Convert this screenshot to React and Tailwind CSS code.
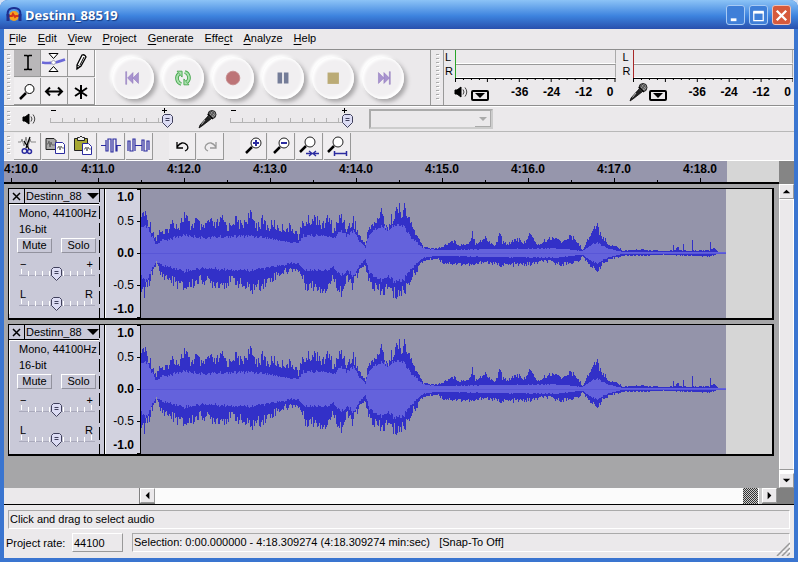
import clsx from 'clsx';

const MENUS = ['File', 'Edit', 'View', 'Project', 'Generate', 'Effect', 'Analyze', 'Help'];
const UNDERLINED = { Effect: 4 };

// [x, amplitude] points of the waveform outline
const UPPER = [
  [0, 42], [2, 46], [6, 39], [11, 26], [15, 15], [18, 27], [22, 20], [27, 28], [32, 36], [37, 30], [43, 43],
  [49, 30], [55, 37], [61, 26], [67, 36], [74, 31], [81, 38], [87, 29], [93, 39], [100, 31], [108, 43], [116, 32],
  [122, 37], [127, 28], [132, 34], [137, 28], [147, 29], [154, 26], [157, 18], [161, 33], [169, 38], [177, 40],
  [181, 29], [185, 40], [190, 33], [192, 24], [200, 43], [206, 27], [212, 38], [217, 22], [224, 9], [227, 30],
  [234, 33], [239, 47], [247, 28], [252, 45], [261, 50], [264, 47], [271, 30], [277, 16], [282, 7], [296, 5],
  [302, 8], [311, 14], [319, 9], [328, 12], [331, 24], [334, 11], [344, 17], [352, 9], [356, 12], [358, 26],
  [361, 12], [366, 11], [376, 17], [381, 10], [388, 21], [397, 9], [404, 14], [414, 19], [421, 11], [425, 19],
  [434, 16], [441, 4], [446, 14], [451, 27], [456, 30], [461, 19], [466, 11], [474, 8], [481, 3], [500, 4],
  [524, 2], [531, 3], [532, 11], [533, 3], [537, 7], [538, 3], [541, 3], [542, 11], [543, 3], [550, 2], [551, 13],
  [552, 3], [568, 3], [569, 12], [570, 4], [573, 6], [577, 1], [585, 1],
];
const LOWER = [
  [0, 42], [2, 47], [7, 36], [12, 19], [15, 11], [19, 24], [27, 29], [43, 40], [60, 30], [69, 34], [81, 35],
  [93, 31], [108, 42], [124, 34], [137, 24], [154, 18], [159, 23], [164, 36], [185, 41], [192, 28], [200, 45],
  [206, 30], [211, 36], [217, 24], [223, 12], [227, 32], [239, 46], [247, 40], [252, 47], [262, 45], [269, 30],
  [276, 18], [282, 9], [296, 6], [302, 11], [332, 14], [342, 10], [360, 14], [389, 13], [404, 9], [419, 13],
  [437, 10], [441, 4], [447, 11], [454, 21], [462, 12], [474, 5], [484, 3], [500, 3], [524, 2], [569, 4], [577, 1],
  [585, 1],
];
const RMS = [
  [0, 26], [4, 31], [10, 18], [15, 9], [20, 13], [30, 15], [43, 19], [60, 16], [80, 17], [108, 18], [125, 16],
  [150, 11], [157, 11], [162, 18], [185, 18], [192, 15], [200, 24], [206, 18], [212, 24], [218, 13], [224, 6],
  [228, 21], [240, 29], [247, 25], [252, 29], [262, 29], [270, 16], [282, 5], [296, 3], [340, 4], [414, 5],
  [441, 2], [451, 9], [456, 11], [466, 5], [481, 1], [585, 1],
];

const levelAt = (points, x) => {
  const i = points.findIndex((p) => p[0] >= x);
  if (i <= 0) return points[0][1];
  const [x0, y0] = points[i - 1];
  const [x1, y1] = points[i];
  return y0 + ((y1 - y0) * (x - x0)) / (x1 - x0);
};

const noise = (n) => {
  const v = Math.sin(n * 12.9898) * 43758.5453;
  return v - Math.floor(v);
};

const outline = (top, bottom, depth, seed) => {
  let up = '';
  let down = '';
  for (let x = 0; x < 585; x += 1) {
    const a = levelAt(top, x) * (1.04 - depth * noise(x + seed));
    const b = levelAt(bottom, x) * (1.04 - depth * noise(x + seed + 700));
    up += `L${x} ${64 - a}L${x + 1} ${64 - a}`;
    down = `L${x + 1} ${64 + b}L${x} ${64 + b}` + down;
  }
  return `M0 64${up}${down}Z`;
};

const PEAK_PATH = outline(UPPER, LOWER, 0.34, 3);
const RMS_PATH = outline(RMS, RMS, 0.18, 91);

const Grip = () => (
  <div className="w-[10px] shrink-0 self-stretch flex justify-center py-1">
    <svg className="w-1 h-full" aria-hidden="true">
      <defs>
        <pattern id="grip" width="4" height="4" patternUnits="userSpaceOnUse">
          <path d="M0 .5h3" stroke="#aaa" />
          <path d="M1 1.5h3" stroke="#fff" />
        </pattern>
      </defs>
      <rect width="4" height="100%" fill="url(#grip)" />
    </svg>
  </div>
);

const Speaker = () => (
  <svg width="14" height="14" viewBox="0 0 14 14" fill="none" stroke="#000" aria-hidden="true">
    <path d="M1 5h2l4-3v10l-4-3H1z" fill="#000" />
    <path d="M9 4.500q2 2.500 0 5M11 2.500q3.500 4.500 0 9" stroke="#444" />
  </svg>
);

const Mic = () => (
  <svg width="20" height="20" viewBox="0 0 20 20" aria-hidden="true">
    <path d="M10 7l3 3-9 7-3 2 1-3z" fill="#222" stroke="#000" strokeWidth=".7" />
    <path d="M7 11l-3.500 4.500" stroke="#bbb" />
    <circle cx="14" cy="5.500" r="4" fill="#999" stroke="#222" />
    <path d="M11 3l6 5M10.500 6l4 3M13 2l4.500 4M16.500 2.500l-5 6M13.500 2l-3 4" stroke="#333" strokeWidth=".7" />
    <path d="M10 5l5 5" stroke="#000" strokeWidth="1.500" />
  </svg>
);

const Lens = ({ x = 15, y = 9, r = 5 }) => (
  <>
    <path d={`M${x - 4} ${y + 4}l-6 6`} stroke="#000" strokeWidth="2.500" />
    <circle cx={x} cy={y} r={r} fill="#fff" stroke="#222" />
  </>
);

const toolIcons = {
  Selection: <path d="M10 5.500h3l1 1 1-1h3M10 19.500h3l1-1 1 1h3M14 6v13" strokeWidth="1.600" />,
  Envelope: (
    <>
      <path d="M1 12.500q11 2 23-3" stroke="#6b68d8" strokeWidth="2.500" />
      <path d="M8 3.500h9l-4.500 5zM8 21.500h9l-4.500-5z" fill="#fff" />
      <circle cx="12.500" cy="12.500" r="2" fill="#fff" stroke="#aab" />
    </>
  ),
  Draw: (
    <>
      <path d="M9 15l5-10q3-1 4 2l-5 9-4 3z" fill="#fff" strokeWidth="1.300" />
      <path d="M9 15l3 1.500M12 15l4-8M9 19l1-2" />
    </>
  ),
  Zoom: (
    <>
      <path d="M12 15l-6 6" strokeWidth="2.500" />
      <circle cx="15.500" cy="11" r="4.500" fill="#fff" />
    </>
  ),
  'Time Shift': <path d="M5 13.500h16M9 9.500l-4 4 4 4M17 9.500l4 4-4 4" strokeWidth="2" />,
  'Multi-Tool': <path d="M13 7v14M7 10l12 8M19 10L7 18" strokeWidth="2" />,
};

const LOOP_ARCS = 'M9 17.500A6.500 6.500 0 0 1 6.500 6.500M13 4.500a6.500 6.500 0 0 1 2.500 11';

const transport = {
  'Skip to Start': (
    <g fill="#a893cf" stroke="#9078bd" strokeWidth=".6">
      <path d="M3 4h1v14H3zM11 5v12L5 11zM17 5v12l-6-6z" />
    </g>
  ),
  Play: (
    <g fill="none" stroke="#47a84e">
      <path d={LOOP_ARCS} strokeWidth="4" />
      <path d="M4.500 3.500H10V10zM17.500 18.500H12V12z" fill="#a9e0ad" />
      <path d={LOOP_ARCS} stroke="#a9e0ad" strokeWidth="2" />
    </g>
  ),
  Record: <circle cx="11" cy="11" r="7.500" fill="#bd7477" stroke="#c68b8d" />,
  Pause: <path d="M5 5h5v12H5zM12 5h5v12h-5z" fill="#747c98" />,
  Stop: <path d="M5 5h12.500v12.500H5z" fill="#bbab76" />,
  'Skip to End': (
    <g fill="#a893cf" stroke="#9078bd" strokeWidth=".6">
      <path d="M18 4h1v14h-1zM6 5v12l6-6zM12 5v12l6-6z" />
    </g>
  ),
};

const editIcons = {
  Cut: (
    <>
      <path d="M3 8h3l1-3 2 7 2-9 2 10 2-8 1 3h5" stroke="#888" />
      <path d="M15 3l-4 11M9 7l5 8" strokeWidth="1.300" />
      <circle cx="9.500" cy="17" r="2.300" stroke="#2b2ba0" strokeWidth="1.500" />
      <circle cx="14.500" cy="17.500" r="2" stroke="#2b2ba0" strokeWidth="1.500" />
    </>
  ),
  Copy: (
    <>
      <path d="M3 4.500h8l2 2v9H3z" fill="#aaa" stroke="#222" />
      <path d="M4 10h1l1-3 1 6 1-5 1 3h3" stroke="#666" />
      <path d="M12.500 8.500h7l2 2v9h-9z" fill="#fff" stroke="#2b2ba0" />
      <path d="M14 14h1l1-2 1 4 1-4 1 2h2" stroke="#555" strokeWidth=".8" />
    </>
  ),
  Paste: (
    <>
      <path d="M3.500 4.500h13v12h-13z" fill="#a8a832" stroke="#222" />
      <path d="M6.500 6.500v-3h2l1.500-1.500 1.500 1.500h2v3z" fill="#eee" stroke="#222" />
      <path d="M11.500 9.500h6l3 3v8h-9z" fill="#fff" stroke="#2b2ba0" />
      <path d="M13 15h1l1-2 1 4 1-4 1 2h2" stroke="#555" strokeWidth=".8" />
    </>
  ),
  Trim: <path d="M2 11.500h5V6v11h2V5h3v13h2V5h3v12h1v-5.500h4" stroke="#2b2ba0" strokeWidth="1.200" />,
  Silence: <path d="M1 17V7h2v10h3V5h2v12M8 11.500h7M15 17V6h2v11h3V7h2v9" stroke="#2b2ba0" strokeWidth="1.200" />,
};

const historyIcons = {
  Undo: <path d="M7 8v6h6M7 13q5-7 10-2 2.500 4-2 6" strokeWidth="1.300" />,
  Redo: <path d="M18 8v6h-6M18 13q-5-7-10-2-2.500 4 2 6" stroke="#999" strokeWidth="1.300" />,
};

const zoomIcons = {
  'Zoom In': (
    <>
      <Lens />
      <path d="M12 9h6M15 6v6" stroke="#2b2ba0" strokeWidth="2" />
    </>
  ),
  'Zoom Out': (
    <>
      <Lens />
      <path d="M12 9h6" stroke="#2b2ba0" strokeWidth="2" />
    </>
  ),
  'Fit Selection': (
    <>
      <Lens x={13} y={8} />
      <path d="M9 19.500h13M12 17l3 2.500-3 2.500M19 17l-3 2.500 3 2.500" stroke="#2b2ba0" strokeWidth="1.300" />
    </>
  ),
  'Fit Project': (
    <>
      <Lens x={13} y={8} />
      <path d="M9 19.500h13M9.500 17v5M21.500 17v5" stroke="#2b2ba0" strokeWidth="1.500" />
    </>
  ),
};

const IconButton = ({ label, pressed, children }) => (
  <button
    type="button"
    aria-label={label}
    className={clsx(
      'w-[27px] h-[27px] flex items-center justify-center border-r border-b border-[#989898]',
      pressed ? 'bg-[#b9b7b9]' : 'bg-[#f0eef0]',
    )}
  >
    {children}
  </button>
);

const IconGroup = ({ icons }) => (
  <div className="flex gap-px">
    {Object.entries(icons).map(([label, icon]) => (
      <IconButton key={label} label={label}>
        <svg width="24" height="24" viewBox="0 0 24 24" fill="none" stroke="#000" aria-hidden="true">
          {icon}
        </svg>
      </IconButton>
    ))}
  </div>
);

const TitleBar = () => (
  <header className="h-[29px] flex items-center pl-[5px] pr-[7px] bg-linear-to-b from-[#8cc3f6] via-[#3d83de] via-55% to-[#2950ad]">
    <svg width="18" height="18" viewBox="0 0 18 18" fill="none" aria-hidden="true">
      <circle cx="9" cy="10" r="5" fill="#f5a21f" />
      <path d="M4 10h3l1-2 2 3 1-1h3" stroke="#d5331a" strokeWidth="2" />
      <path d="M3 11Q1 2 9 2t6 9" stroke="#1b2f91" strokeWidth="2" />
      <path d="M3 8v7M15 8v7" stroke="#20308c" strokeWidth="3" />
    </svg>
    <h1 className="ml-[2px] font-['Noto_Sans',sans-serif] text-[13px] leading-4 font-bold text-white [text-shadow:1px_1px_1px_#14387f]">
      Destinn_88519
    </h1>
    <div className="ml-auto flex gap-1 pt-px">
      <button type="button" aria-label="Minimize" className="w-[19px] h-[20px] rounded-[3px] border border-[#a9cbf4] bg-[#3f7fd8]">
        <svg viewBox="0 0 18 18" aria-hidden="true">
          <path d="M4 12h6v3H4z" fill="#fff" />
        </svg>
      </button>
      <button type="button" aria-label="Maximize" className="w-[19px] h-[20px] rounded-[3px] border border-[#a9cbf4] bg-[#3f7fd8]">
        <svg viewBox="0 0 18 18" aria-hidden="true">
          <path d="M4 5.500h10v9H4z" fill="none" stroke="#fff" strokeWidth="1.300" />
          <path d="M3.500 4h11v3h-11z" fill="#fff" />
        </svg>
      </button>
      <button type="button" aria-label="Close" className="w-[19px] h-[20px] rounded-[3px] border border-[#f0c0b4] bg-[#d65a3c]">
        <svg viewBox="0 0 18 18" aria-hidden="true">
          <path d="M4 4l10 10M14 4L4 14" stroke="#fff" strokeWidth="2.500" />
        </svg>
      </button>
    </div>
  </header>
);

const MenuBar = () => (
  <nav className="h-5 flex items-center gap-[11px] px-[5px] pb-[2px]">
    {MENUS.map((name) => {
      const at = UNDERLINED[name] ?? 0;
      return (
        <button type="button" key={name}>
          {name.slice(0, at)}
          <span className="underline underline-offset-2">{name[at]}</span>
          {name.slice(at + 1)}
        </button>
      );
    })}
  </nav>
);

const Meter = ({ label, icon, line }) => (
  <section aria-label={label} className="flex-1 flex flex-col">
    <div className="flex">
      <div className="w-[10px] text-[11px] leading-[14px]">
        <div>L</div>
        <div>R</div>
      </div>
      <div className={clsx('flex-1 border-l', line)}>
        <div className="h-[14px] border-r border-r-[#aaa] border-b border-b-white" />
        <div className="h-[14px] border-t border-t-[#999] border-r border-r-[#aaa] border-b border-b-white" />
      </div>
    </div>
    <svg className="ml-[10px] w-[calc(100%-10px)] h-[5px]" viewBox="0 0 161 5" preserveAspectRatio="none" aria-hidden="true">
      <path d="M0 .5h161" stroke="#000" />
      {Array.from({ length: 21 }, (_, i) => (
        <path key={i} d={`M${i * 8 + 0.5} 0v${i % 4 === 0 ? 4 : 2}`} stroke="#000" />
      ))}
    </svg>
    <div className="flex items-center h-[17px] pl-[6px]">
      <span className="w-[20px] flex justify-center">{icon}</span>
      <button type="button" aria-label={`${label} options`} className="mt-2 w-[18px] h-[11px] border-2 border-black rounded-[2px] flex justify-center">
        <svg width="12" height="7" aria-hidden="true">
          <path d="M1 1h10L6 6z" fill="#000" />
        </svg>
      </button>
      <div className="flex-1 flex justify-between pl-[22px] pr-[2px] font-bold text-[12px] leading-4">
        <span>-36</span>
        <span>-24</span>
        <span>-12</span>
        <span>0</span>
      </div>
    </div>
  </section>
);

const ControlToolbar = () => (
  <div className="h-[57px] flex border-t border-[#8e8e8e] border-b">
    <Grip />
    <div className="grid grid-cols-3 shrink-0 border-r border-white">
      {Object.entries(toolIcons).map(([label, icon]) => (
        <IconButton key={label} label={`${label} Tool`} pressed={label === 'Selection'}>
          <svg width="26" height="26" viewBox="0 0 26 26" fill="none" stroke="#000" aria-hidden="true">
            {icon}
          </svg>
        </IconButton>
      ))}
    </div>
    <div className="flex items-center pl-3 pr-[22px] shrink-0 bg-[#ebe9eb]">
      {Object.entries(transport).map(([label, icon]) => (
        <div key={label} className="w-[50px] flex justify-center">
          <button
            type="button"
            aria-label={label}
            className="size-[42px] rounded-full flex items-center justify-center bg-[#f1eff1] shadow-[3px_3px_4px_#a9a7a9,-2px_-2px_3px_#fff,inset_2px_2px_3px_#fff,inset_-2px_-2px_3px_#fff]"
          >
            <svg width="20" height="20" viewBox="0 0 22 22" aria-hidden="true">
              {icon}
            </svg>
          </button>
        </div>
      ))}
    </div>
    <div className="w-[3px] shrink-0 border-l border-[#999]" />
    <Grip />
    <div className="flex-1 flex gap-[7px] border-l border-[#999] pl-px pr-px">
      <Meter label="Playback meter" icon={<Speaker />} line="border-l-[#28a528]" />
      <Meter label="Recording meter" icon={<Mic />} line="border-l-[#a82828]" />
    </div>
  </div>
);

const Thumb = ({ x }) => (
  <path
    d={`M${x - 5} 9.500l2-2h6l2 2v6l-5 5-5-5zM${x - 2} 11.500h4M${x - 2} 13.500h4`}
    fill="#dcdcf4"
    stroke="#40405c"
  />
);

const VolumeSlider = ({ label }) => (
  <div className="relative w-[128px] h-[24px]">
    <svg width="128" height="24" viewBox="0 0 128 24" fill="none" aria-hidden="true">
      <path d="M3 3.500h5M114 3.500h5M116.500 1v5" stroke="#000" />
      <path d="M3 15.500h118" stroke="#b4b4b4" />
      {Array.from({ length: 11 }, (_, i) => (
        <path key={i} d={`M${i * 12 + 2.5} 11v5`} stroke="#b4b4b4" />
      ))}
      <Thumb x={119.5} />
    </svg>
    <input type="range" aria-label={label} defaultValue="100" className="absolute inset-0 w-full h-full opacity-0" />
  </div>
);

const MixerToolbar = () => (
  <div className="h-[26px] flex items-center border-t border-white border-b border-b-[#b8b8b8]">
    <Grip />
    <div className="w-[34px] pl-2">
      <Speaker />
    </div>
    <VolumeSlider label="Output volume" />
    <div className="w-[52px] pl-[22px]">
      <Mic />
    </div>
    <VolumeSlider label="Input volume" />
    <div className="relative ml-[13px]">
      <select
        aria-label="Input source"
        disabled
        className="block w-[124px] h-5 appearance-none border-2 border-[#aaa] border-r-[#ccc] border-b-[#ccc] bg-[#ebe9eb]"
      />
      <svg className="absolute right-[2px] top-[2px] border-r border-b border-[#aaa] pointer-events-none" width="16" height="16" aria-hidden="true">
        <path d="M4 6h8l-4 4z" fill="#aaa" />
      </svg>
    </div>
  </div>
);

const EditToolbar = () => (
  <div className="h-[29px] flex items-center border-b border-white">
    <Grip />
    <div className="flex gap-4">
      <IconGroup icons={editIcons} />
      <IconGroup icons={historyIcons} />
      <IconGroup icons={zoomIcons} />
    </div>
  </div>
);

const Ruler = () => (
  <div className="h-[23px] flex bg-[#858585]">
    <div className="flex-1 flex overflow-hidden bg-[#9696ac] border-b border-black">
      <div className="flex-1 flex overflow-hidden border-b border-black text-[12px] leading-[17px] font-bold">
        <div className="w-[51px] shrink-0">
          4:10.0
          <svg className="block" width="51" height="4" aria-hidden="true">
            <path d="M7.500 0v4" stroke="#000" />
          </svg>
        </div>
        {[11, 12, 13, 14, 15, 16, 17, 18].map((second) => (
          <div key={second} className="w-[86px] shrink-0 flex flex-col items-center">
            4:{second}.0
            <svg width="86" height="4" aria-hidden="true">
              <path d="M43.500 0v4M.5 2v2" stroke="#000" />
            </svg>
          </div>
        ))}
      </div>
      <div className="w-[52px] shrink-0 bg-[#d6d6d6] border-b border-black" />
    </div>
    <div className="w-[15px] shrink-0" />
  </div>
);

const TrackSlider = ({ label, left, right }) => (
  <div className="relative h-6">
    <svg width="80" height="24" viewBox="0 0 80 24" fill="none" aria-hidden="true">
      <path d="M2 15.500h76" stroke="#aaaabc" />
      {Array.from({ length: 11 }, (_, i) => (
        <path key={i} d={`M${i * 7 + 4.5} ${i % 5 === 0 ? 9 : 11}v5`} stroke="#fff" />
      ))}
      <Thumb x={39.5} />
    </svg>
    <span className="absolute left-[3px] -top-[3px] text-[11px] leading-[14px]">{left}</span>
    <span className="absolute right-[6px] -top-[3px] text-[11px] leading-[14px]">{right}</span>
    <input type="range" aria-label={label} className="absolute inset-0 w-full h-full opacity-0" />
  </div>
);

const bevel = 'w-[35px] border border-white border-r-[#92929e] border-b-[#92929e] text-center leading-[13px]';

const TrackPanel = () => (
  <div className="w-[96px] shrink-0 flex bg-[#c9c9d8] border-r border-black">
    <div className="w-[90px]">
      <div className="h-[15px] flex border-b border-black">
        <button type="button" aria-label="Close track" className="w-4 border-r border-black flex items-center justify-center">
          <svg width="9" height="9" aria-hidden="true">
            <path d="M1 1l7 7M8 1L1 8" stroke="#000" strokeWidth="1.500" />
          </svg>
        </button>
        <button type="button" className="flex-1 flex items-center justify-between pl-px leading-[14px]">
          Destinn_88
          <svg width="12" height="7" aria-hidden="true">
            <path d="M0 0h12L6 6z" fill="#000" />
          </svg>
        </button>
      </div>
      <div className="border-t border-l border-white pl-[9px]">
        <div className="leading-4 whitespace-nowrap">
          <p>Mono, 44100Hz</p>
          <p>16-bit</p>
        </div>
        <div className="mt-px flex gap-[9px] -ml-[2px]">
          <button type="button" className={bevel}>Mute</button>
          <button type="button" className={bevel}>Solo</button>
        </div>
        <div className="-ml-[2px] pt-[7px] flex flex-col gap-[6px]">
          <TrackSlider label="Gain" left="−" right="+" />
          <TrackSlider label="Pan" left="L" right="R" />
        </div>
      </div>
    </div>
    <div className="w-px bg-[repeating-linear-gradient(#000_0_13px,transparent_13px_17px)]" />
  </div>
);

const Track = () => (
  <article className="flex border border-black border-r-2 border-b-2">
    <TrackPanel />
    <div className="w-[36px] shrink-0 flex bg-[#d2d2df] border-l border-l-white border-r border-r-black">
      <div className="flex-1 text-right text-[12px]">
        <b className="block leading-4">1.0</b>
        <span className="block leading-8">0.5</span>
        <b className="block leading-8">0.0</b>
        <span className="block leading-8">-0.5</span>
        <b className="block leading-4">-1.0</b>
      </div>
      <svg width="6" height="129" aria-hidden="true">
        <path d="M3 .5h3M3 32.500h3M3 64.500h3M3 96.500h3M3 128.500h3" stroke="#000" />
      </svg>
    </div>
    <div className="flex-1 bg-[#9494aa]">
      <svg className="block w-full h-[129px]" viewBox="0 0 585 129" preserveAspectRatio="none" shapeRendering="crispEdges" aria-hidden="true">
        <path d={PEAK_PATH} fill="#3230c8" />
        <path d={RMS_PATH} fill="#6462dc" />
        <path d="M0 64.500h585" stroke="#3f3dcc" strokeWidth="1" opacity=".3" />
      </svg>
    </div>
    <div className="w-[46px] shrink-0 bg-[#d6d6d6]" />
  </article>
);

const ARROWS = {
  up: 'M3 9h8L7 5z',
  down: 'M3 5h8L7 9z',
  left: 'M9 3v8L5 7z',
  right: 'M5 3v8l4-4z',
};

const ScrollButton = ({ direction }) => (
  <button
    type="button"
    aria-label={`Scroll ${direction}`}
    className="size-[15px] shrink-0 bg-[#ebe9eb] border border-white border-r-[#999] border-b-[#999]"
  >
    <svg viewBox="0 0 14 14" aria-hidden="true">
      <path d={ARROWS[direction]} fill="#000" />
    </svg>
  </button>
);

const TrackArea = () => (
  <main className="flex-1 flex bg-[#a6a6a8]">
    <div className="flex-1 flex flex-col gap-1 pl-1 pr-[5px] pt-1">
      <Track />
      <Track />
    </div>
    <div className="w-[15px] shrink-0 flex flex-col bg-white">
      <ScrollButton direction="up" />
      <div className="flex-1 mb-[3px] bg-[#ebe9eb] border border-white border-b-[#999]" />
      <ScrollButton direction="down" />
    </div>
  </main>
);

const HorizontalScroll = () => (
  <div className="h-[17px] flex bg-[#808080] border-b border-black">
    <div className="w-[135px] shrink-0 mr-px bg-[#ebe9eb]" />
    <ScrollButton direction="left" />
    <div className="flex-1 flex justify-end bg-[#fbfbfb]">
      <div className="w-[15px] bg-[repeating-conic-gradient(#333_0_25%,#ccc_0_50%)] bg-[length:2px_2px]" />
      <div className="w-1 border-l border-white bg-[#ccc]" />
    </div>
    <ScrollButton direction="right" />
    <div className="w-[17px] shrink-0" />
  </div>
);

const StatusBar = () => (
  <footer className="h-[53px] px-1 pt-[5px]">
    <p className="h-[19px] pl-px leading-[17px] border border-[#aaa] border-r-white border-b-white">
      Click and drag to select audio
    </p>
    <div className="mt-1 flex items-center">
      <label htmlFor="rate" className="-ml-[2px] w-[66px]">
        Project rate:
      </label>
      <button id="rate" type="button" className="w-[51px] h-[19px] pl-px text-left border border-white border-r-[#999] border-b-[#999]">
        44100
      </button>
      <p className="relative flex-1 ml-[9px] h-[19px] pl-px leading-[17px] border border-[#aaa] border-r-white border-b-white whitespace-pre">
        {'Selection: 0:00.000000 - 4:18.309274 (4:18.309274 min:sec)   [Snap-To Off]'}
        <svg className="absolute -right-px -bottom-[5px]" width="14" height="14" stroke="#999" aria-hidden="true">
          <path d="M1 14L14 1M6 14l8-8M11 14l3-3" strokeWidth="1.500" />
        </svg>
      </p>
    </div>
  </footer>
);

export default function App() {
  return (
    <div className="bg-[#d4e2f6]">
      <div className="min-h-screen flex flex-col rounded-t-lg overflow-hidden bg-[#3a75d0] font-['Liberation_Sans',Arial,sans-serif] text-[11px] leading-[14px] text-black">
        <TitleBar />
        <div className="flex-1 flex flex-col mx-1 mb-1 bg-[#ebe9eb]">
          <MenuBar />
          <ControlToolbar />
          <MixerToolbar />
          <EditToolbar />
          <Ruler />
          <TrackArea />
          <HorizontalScroll />
          <StatusBar />
        </div>
      </div>
    </div>
  );
}
